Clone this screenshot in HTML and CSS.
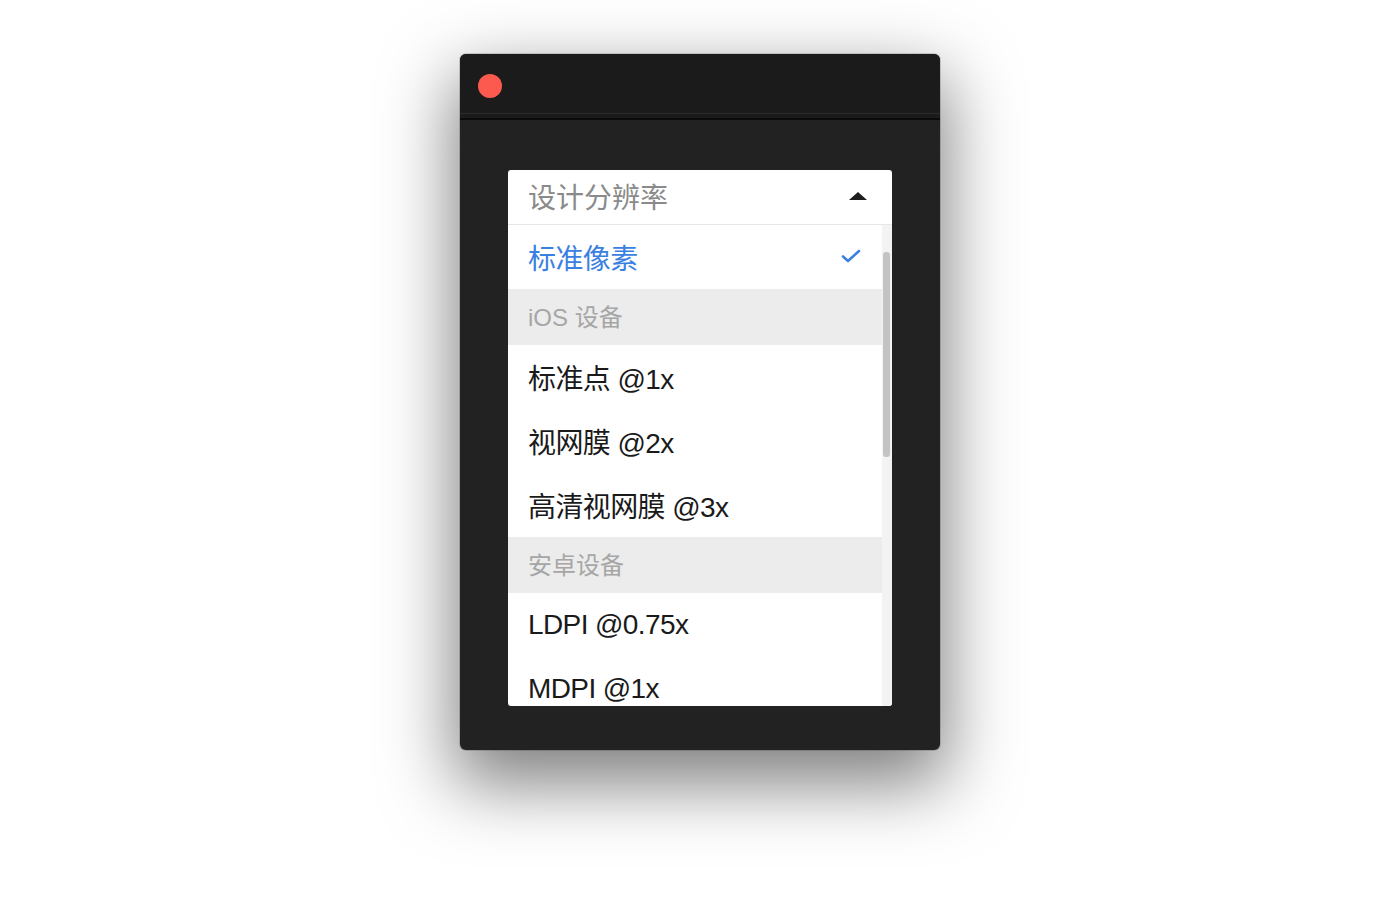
FILE: index.html
```html
<!DOCTYPE html>
<html lang="zh-CN">
<head>
<meta charset="utf-8">
<title>设计分辨率</title>
<link rel="stylesheet" href="styles.css">
</head>
<body>
<div class="window">
  <div class="titlebar"><span class="close"></span></div>
  <div class="content">
    <div class="select">
      <div class="select-head">
        <span class="placeholder">设计分辨率</span>
        <svg class="caret" width="18" height="8" viewBox="0 0 18 8"><path d="M0 8 L9 0 L18 8 Z" fill="#1e1e1e"/></svg>
      </div>
      <div class="select-body">
        <ul class="options">
          <li class="option selected"><span>标准像素</span>
            <svg class="check" width="20" height="14" viewBox="0 0 20 14"><path d="M2 7.5 L7 12 L18 2" fill="none" stroke="#3a80e2" stroke-width="2.6" stroke-linecap="round" stroke-linejoin="round"/></svg>
          </li>
          <li class="group">iOS 设备</li>
          <li class="option">标准点 @1x</li>
          <li class="option">视网膜 @2x</li>
          <li class="option">高清视网膜 @3x</li>
          <li class="group">安卓设备</li>
          <li class="option">LDPI @0.75x</li>
          <li class="option">MDPI @1x</li>
        </ul>
        <div class="scrollbar"><div class="thumb"></div></div>
      </div>
    </div>
  </div>
</div>
</body>
</html>
```
FILE: styles.css
```css
html, body {
  margin: 0;
  padding: 0;
  background: #ffffff;
}
body {
  font-family: "Liberation Sans", "Noto Sans CJK SC", sans-serif;
  display: flex;
  justify-content: center;
  padding-top: 54px;
  height: 900px;
  box-sizing: border-box;
  overflow: hidden;
}
.window {
  width: 480px;
  height: 696px;
  border-radius: 6px;
  background: #222222;
  box-shadow: 0 28px 70px 6px rgba(0, 0, 0, 0.5), 0 0 0 1px rgba(0, 0, 0, 0.15);
  display: flex;
  flex-direction: column;
  overflow: hidden;
}
.titlebar {
  flex: none;
  height: 66px;
  box-sizing: border-box;
  background: linear-gradient(to bottom, #1b1b1b 59px, #2b2b2b 59px, #2b2b2b 60px, #1b1b1b 60px);
  border-bottom: 2px solid #0b0b0b;
  display: flex;
  align-items: center;
  padding-left: 18px;
}
.close {
  width: 24px;
  height: 24px;
  border-radius: 50%;
  background: #fd5a4f;
  margin-top: 0;
}
.content {
  flex: 1;
  padding: 50px 48px 0 48px;
}
.select {
  width: 384px;
  height: 536px;
  background: #ffffff;
  border-radius: 3px;
  overflow: hidden;
  display: flex;
  flex-direction: column;
}
.select-head {
  height: 54px;
  flex: none;
  border-bottom: 1px solid #e6e6e6;
  display: flex;
  align-items: center;
  justify-content: space-between;
  padding: 0 25px 0 20px;
}
.placeholder {
  font-size: 28px;
  color: #8a8a8a;
  margin-top: -2px;
}
.caret {
  display: block;
  margin-top: -2px;
}
.select-body {
  flex: 1;
  display: flex;
  min-height: 0;
}
.options {
  list-style: none;
  margin: 0;
  padding: 0;
  flex: 1;
  overflow: hidden;
}
.option {
  height: 64px;
  display: flex;
  align-items: center;
  justify-content: space-between;
  padding: 0 21px 0 20px;
  font-size: 28px;
  color: #1a1a1a;
  letter-spacing: -0.6px;
}
.option.selected {
  color: #3a80e2;
}
.check {
  display: block;
  margin-top: -2px;
}
.group {
  height: 56px;
  display: flex;
  align-items: center;
  padding: 0 0 4px 20px;
  box-sizing: border-box;
  background: #ececec;
  color: #a6a6a6;
  font-size: 24px;
}
.scrollbar {
  width: 10px;
  flex: none;
  background: #f3f3f3;
  padding-top: 27px;
  box-sizing: border-box;
}
.thumb {
  width: 7px;
  height: 205px;
  margin-left: 1px;
  border-radius: 3px;
  background: #c3c3c3;
}
```
